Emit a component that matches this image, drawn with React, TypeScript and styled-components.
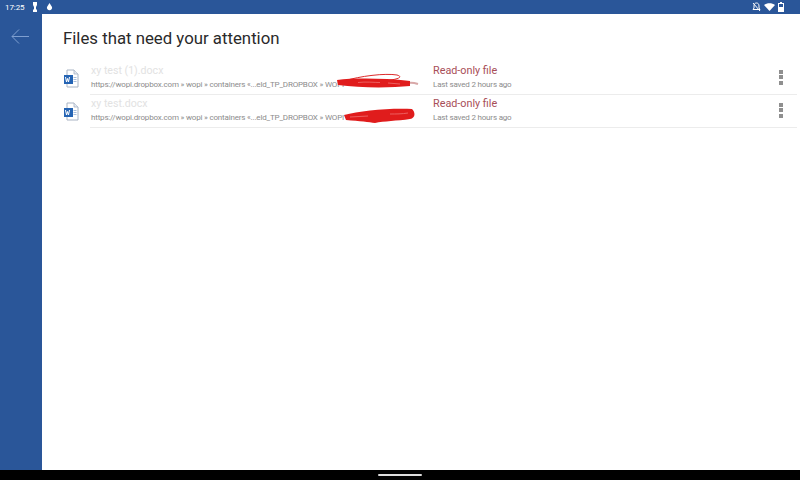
import React, {FC} from 'react';
import styled, {createGlobalStyle} from 'styled-components';

const GlobalStyle = createGlobalStyle`
    html, body {
        margin: 0;
        padding: 0;
        background: #fff;
    }
    body {
        font-family: Roboto, "Liberation Sans", sans-serif;
    }
`;

const Screen = styled.div`
    width: 800px;
    height: 480px;
    display: flex;
    flex-direction: column;
    overflow: hidden;
`;
const StatusBar = styled.div`
    height: 14px;
    flex: none;
    background-color: #2a5699;
    color: #fff;
    display: flex;
    align-items: center;
    justify-content: space-between;
    padding: 0 16px 0 5px;
    font-size: 8px;
    letter-spacing: -0.1px;
`;
const StatusGroup = styled.div<{$gap: number}>`
    display: flex;
    align-items: center;
    gap: ${p => p.$gap}px;
`;
const Main = styled.div`
    flex: 1;
    display: flex;
    min-height: 0;
`;
const Sidebar = styled.div`
    width: 42px;
    flex: none;
    background-color: #2a5699;
    padding: 15px 0 0 11px;
    box-sizing: border-box;
`;
const Content = styled.div`
    flex: 1;
    padding: 13px 3px 0 21px;
`;
const Title = styled.h1`
    margin: 0 0 13px 0;
    font-size: 16.8px;
    line-height: 22px;
    font-weight: 400;
    color: #2a2a2a;
`;
const Row = styled.div`
    display: flex;
    align-items: center;
    height: 33px;
`;
const IconCell = styled.div`
    width: 27px;
    flex: none;
    display: flex;
    align-items: center;
    height: 100%;
`;
const RowBody = styled.div`
    flex: 1;
    height: 100%;
    display: flex;
    align-items: center;
    padding-bottom: 2px;
    border-bottom: 1px solid #ececec;
    box-sizing: border-box;
`;
const NameCell = styled.div`
    position: relative;
    width: 343px;
    flex: none;
    padding-left: 1px;
    box-sizing: border-box;
`;
const StateCell = styled.div`
    flex: 1;
`;
const FileName = styled.div`
    font-size: 10.6px;
    line-height: 15px;
    color: #e2e2e2;
`;
const FilePath = styled.div`
    font-size: 8px;
    letter-spacing: -0.18px;
    line-height: 13px;
    color: #8c8c8c;
    white-space: nowrap;
`;
const ReadOnly = styled.div`
    font-size: 10.8px;
    line-height: 15px;
    color: #a84e57;
`;
const Saved = styled.div`
    font-size: 8px;
    letter-spacing: -0.18px;
    line-height: 13px;
    color: #8c8c8c;
`;
const Scribble = styled.svg<{$left: number}>`
    position: absolute;
    left: ${p => p.$left}px;
    top: 9px;
    filter: blur(0.4px);
`;
const MoreButton = styled.div`
    width: 4px;
    margin-right: 14px;
    display: flex;
    flex-direction: column;
    gap: 1.5px;
`;
const Dot = styled.span`
    width: 4px;
    height: 4px;
    background-color: #8f8f8f;
`;
const NavBar = styled.div`
    height: 10px;
    flex: none;
    background-color: #000;
    display: flex;
    align-items: center;
    justify-content: center;
`;
const HomePill = styled.div`
    width: 44px;
    height: 2px;
    border-radius: 1px;
    background-color: #ddd;
`;

const WordIcon: FC = () => (
    <svg width="16" height="20" viewBox="0 0 16 20">
        <path d="M4 1h7l4 4v13H4z" fill="#fff" stroke="#a9b4c4" strokeWidth="1" />
        <path d="M11 1v4h4" fill="#e4eaf2" stroke="#a9b4c4" strokeWidth="0.8" />
        <rect x="10.5" y="8" width="3" height="1" fill="#a9bedb" />
        <rect x="10.5" y="10" width="3" height="1" fill="#a9bedb" />
        <rect x="10.5" y="12" width="3" height="1" fill="#a9bedb" />
        <rect x="1" y="6" width="9" height="9" fill="#2564b4" />
        <path d="M2.500 8l1 5 1-3.500 1 3.500 1-5" fill="none" stroke="#fff" strokeWidth="1" />
    </svg>
);

const FirstScribble: FC = () => (
    <Scribble $left={240} width="92" height="20" viewBox="0 0 92 20">
        <path d="M78 11C82 10 85 11 88 12" fill="none" stroke="#d8a8a8" strokeWidth="2" />
        <path d="M14 9C30 4 55 1 67 3C74 5 68 8 50 9" fill="none" stroke="#dc2a2a" strokeWidth="1" />
        <path d="M7 8C24 6 52 6 80 9L80 14C60 16 30 16 8 13z" fill="#e01c1c" />
        <path d="M28 10.500C36 9.500 44 10.500 50 10.500M58 11C62 11 66 12 70 12" fill="none" stroke="#f07070" strokeWidth="0.8" />
    </Scribble>
);

const SecondScribble: FC = () => (
    <Scribble $left={252} width="76" height="20" viewBox="0 0 76 20">
        <path d="M2 10C18 6 45 3 70 4C74 8 73 13 68 14C55 16 42 16 33 18C27 17 18 16 4 15z" fill="#e01c1c" />
        <path d="M8 12C14 12 20 11 26 11M48 9C54 9 60 9 66 8" fill="none" stroke="#f07070" strokeWidth="0.8" />
    </Scribble>
);

const files = [
    {name: 'xy test (1).docx', path: 'https://wopi.dropbox.com » wopi » containers «...eld_TP_DROPBOX » WOPI', scribble: <FirstScribble />},
    {name: 'xy test.docx', path: 'https://wopi.dropbox.com » wopi » containers «...eld_TP_DROPBOX » WOPI', scribble: <SecondScribble />},
];

export default function App() {
    return (
        <Screen>
            <GlobalStyle />
            <StatusBar>
                <StatusGroup $gap={8}>
                    <span>17:25</span>
                    <svg width="6" height="10" viewBox="0 0 6 10">
                        <path d="M1 0h4v3L4 5v2l1 1v2H1V8l1-1V5L1 3z" fill="#fff" />
                    </svg>
                    <svg width="7" height="8" viewBox="0 0 7 8">
                        <path d="M3.500 0L6 4a2.600 2.600 0 1 1-5 0z" fill="#fff" />
                    </svg>
                </StatusGroup>
                <StatusGroup $gap={3}>
                    <svg width="9" height="10" viewBox="0 0 9 10">
                        <path d="M4.500 1C3 1 2 2 2 4v2L1 7.500h7L7 6V4C7 2 6 1 4.500 1zM1 1l7 8" fill="none" stroke="#fff" strokeWidth="1" />
                    </svg>
                    <svg width="11" height="8" viewBox="0 0 11 8">
                        <path d="M0 2C3-.5 8-.5 11 2L5.500 8z" fill="#fff" />
                    </svg>
                    <svg width="6" height="10" viewBox="0 0 6 10">
                        <path d="M2 0h2v1h2v9H0V1h2z" fill="#fff" />
                        <rect x="1" y="2" width="4" height="3" fill="#2a5699" />
                    </svg>
                </StatusGroup>
            </StatusBar>
            <Main>
                <Sidebar>
                    <svg width="18" height="15" viewBox="0 0 18 15">
                        <path d="M18 7.500H1M8 .5L1 7.500l7 7" fill="none" stroke="#7f9fd0" strokeWidth="1" />
                    </svg>
                </Sidebar>
                <Content>
                    <Title>Files that need your attention</Title>
                    {files.map(file => (
                        <Row key={file.name}>
                            <IconCell>
                                <WordIcon />
                            </IconCell>
                            <RowBody>
                                <NameCell>
                                    <FileName>{file.name}</FileName>
                                    <FilePath>{file.path}</FilePath>
                                    {file.scribble}
                                </NameCell>
                                <StateCell>
                                    <ReadOnly>Read-only file</ReadOnly>
                                    <Saved>Last saved 2 hours ago</Saved>
                                </StateCell>
                                <MoreButton>
                                    <Dot />
                                    <Dot />
                                    <Dot />
                                </MoreButton>
                            </RowBody>
                        </Row>
                    ))}
                </Content>
            </Main>
            <NavBar>
                <HomePill />
            </NavBar>
        </Screen>
    );
}
